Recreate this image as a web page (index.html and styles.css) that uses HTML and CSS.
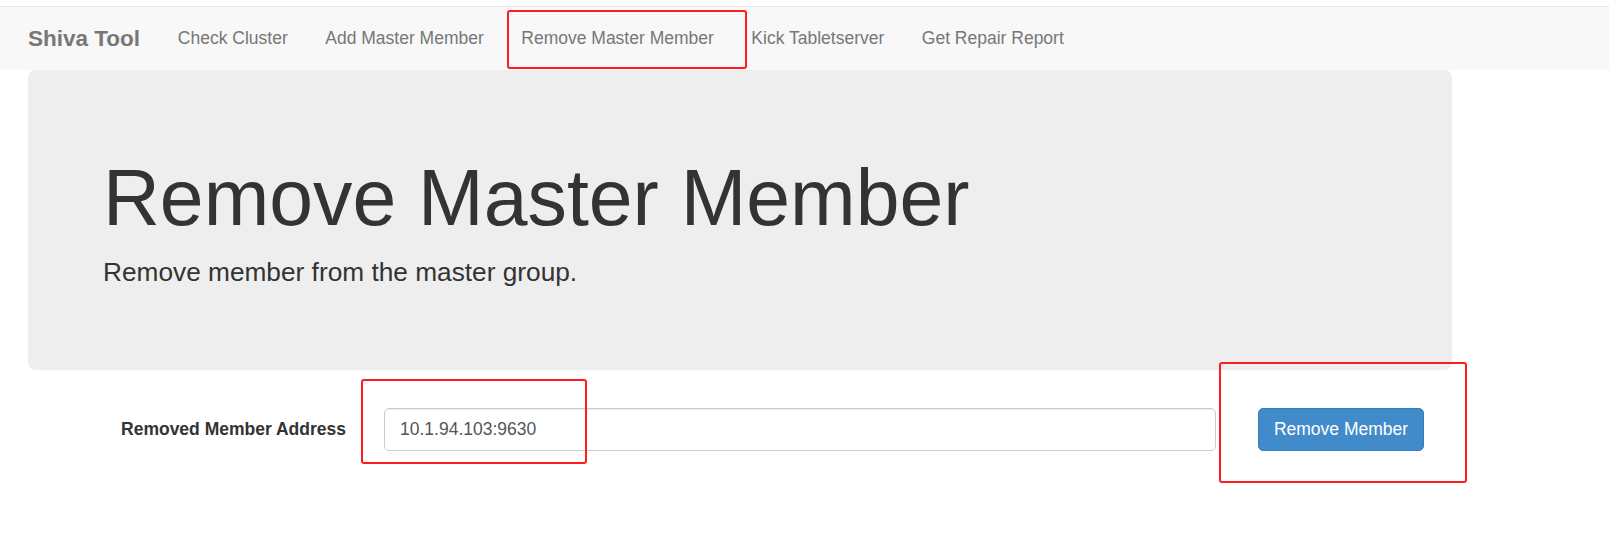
FILE: index.html
```html
<!DOCTYPE html>
<html>
<head>
    <title>Shiva Tool - Remove Master Member</title>
    <link rel="stylesheet" href="styles.css">
</head>
<body>
    <nav class="navbar">
        <a class="brand" href="#">Shiva Tool</a>
        <a class="nav-link" href="#">Check Cluster</a>
        <a class="nav-link" href="#">Add Master Member</a>
        <a class="nav-link" href="#">Remove Master Member</a>
        <a class="nav-link" href="#">Kick Tabletserver</a>
        <a class="nav-link" href="#">Get Repair Report</a>
    </nav>

    <div class="jumbotron">
        <h1>Remove Master Member</h1>
        <p>Remove member from the master group.</p>
    </div>

    <form class="form-row" onsubmit="return false">
        <label class="control-label" for="address">Removed Member Address</label>
        <input class="form-control" id="address" type="text" value="10.1.94.103:9630">
        <button class="btn-primary" type="submit">Remove Member</button>
    </form>

    <!-- annotation boxes drawn on the screenshot -->
    <div class="mark mark-nav"></div>
    <div class="mark mark-input"></div>
    <div class="mark mark-button"></div>
</body>
</html>
```

FILE: styles.css
```css
body {
    margin: 0;
    font-family: "Liberation Sans", Arial, sans-serif;
    color: #333;
    background: #fff;
    position: relative;
    min-height: 549px;
}

.navbar {
    display: flex;
    align-items: center;
    height: 63px;
    margin: 6px 9px 0 0;
    padding-left: 9px;
    background: #f8f8f8;
    border-top: 1px solid #e7e7e7;
    box-sizing: border-box;
    height: 64px;
}
.navbar a { text-decoration: none; color: #777; }
.brand {
    font-size: 22.5px;
    font-weight: bold;
    padding: 0 19px;
}
.nav-link {
    font-size: 17.5px;
    padding: 0 18.75px;
}

.jumbotron {
    width: 1424px;
    margin-left: 28px;
    padding: 60px 75px;
    box-sizing: border-box;
    background: #eee;
    border-radius: 7.5px;
}
.jumbotron h1 {
    margin: 25px 0 12.5px;
    font-size: 78.75px;
    font-weight: 500;
    line-height: 1.1;
}
.jumbotron p {
    margin: 0 0 18.75px;
    font-size: 26.25px;
    line-height: 1.4286;
}

.form-row {
    display: grid;
    grid-template-columns: 346px 832px 166px;
    column-gap: 38px;
    align-items: center;
    margin-top: 38px;
}
.form-row .btn-primary { margin-left: 4px; }
.control-label {
    text-align: right;
    font-size: 17.5px;
    font-weight: bold;
}
.form-control {
    height: 42.5px;
    padding: 0 15px;
    box-sizing: border-box;
    border: 1px solid #ccc;
    border-radius: 5px;
    font-family: inherit;
    font-size: 17.5px;
    color: #555;
    box-shadow: inset 0 1px 1px rgba(0,0,0,0.075);
}
.btn-primary {
    height: 42.5px;
    width: 166px;
    background: #428bca;
    border: 1px solid #357ebd;
    border-radius: 5px;
    color: #fff;
    font-family: inherit;
    font-size: 17.5px;
    cursor: pointer;
}

.mark {
    position: absolute;
    border: 2.5px solid #fe1c1c;
    border-radius: 3px;
    box-sizing: border-box;
}
.mark-nav { left: 507px; top: 10px; width: 240px; height: 59px; }
.mark-input { left: 361px; top: 379px; width: 226px; height: 85px; }
.mark-button { left: 1219px; top: 362px; width: 248px; height: 121px; }
```
